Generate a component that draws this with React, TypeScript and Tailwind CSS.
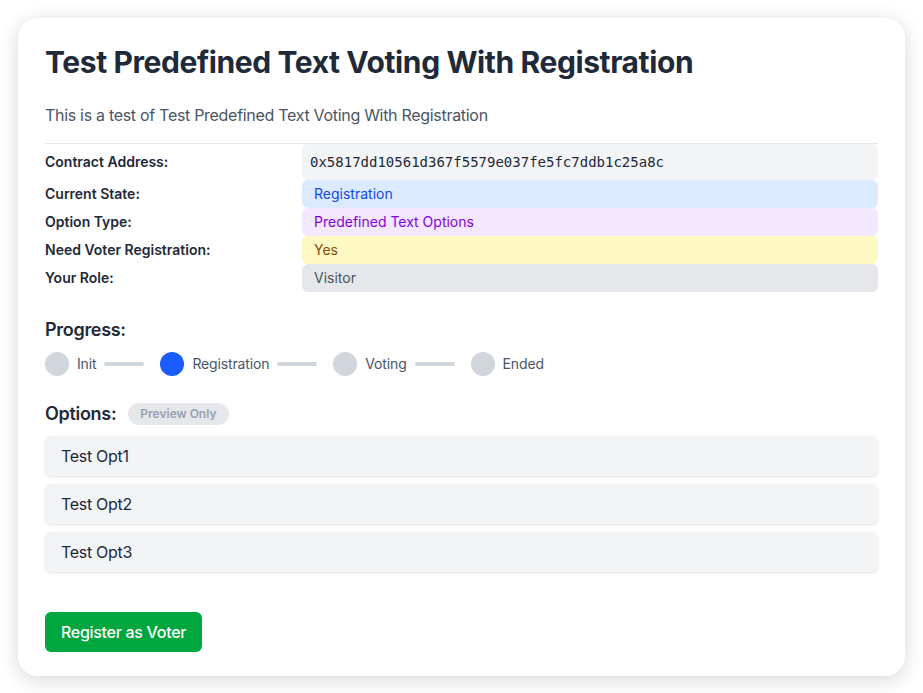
const rows = [
  { label: 'Current State:', value: 'Registration', cls: 'bg-blue-100 text-blue-700' },
  { label: 'Option Type:', value: 'Predefined Text Options', cls: 'bg-purple-100 text-purple-700' },
  { label: 'Need Voter Registration:', value: 'Yes', cls: 'bg-yellow-100 text-yellow-800' },
  { label: 'Your Role:', value: 'Visitor', cls: 'bg-gray-200 text-gray-600' },
];

const steps = ['Init', 'Registration', 'Voting', 'Ended'];
const options = ['Test Opt1', 'Test Opt2', 'Test Opt3'];

export default function App() {
  return (
    <div className="min-h-screen bg-white p-[18px] font-['Inter',sans-serif]">
      <div className="rounded-[20px] bg-white px-[27px] pt-[26px] pb-6 shadow-[0_4px_20px_rgba(0,0,0,0.16)]">
        <h1 className="text-3xl font-bold tracking-[-0.4px] text-gray-800">Test Predefined Text Voting With Registration</h1>
        <p className="mt-[23px] text-base tracking-[-0.3px] text-gray-600">This is a test of Test Predefined Text Voting With Registration</p>

        <div className="mt-4 border-t border-gray-200">
          <div className="grid grid-cols-[257px_1fr] items-center">
            <div className="text-sm font-semibold text-gray-800">Contract Address:</div>
            <div className="rounded-md bg-gray-100 px-2 py-2 font-['DejaVu_Sans_Mono',monospace] text-sm text-gray-800">
              0x5817dd10561d367f5579e037fe5fc7ddb1c25a8c
            </div>
            {rows.map((row) => (
              <div key={row.label} className="contents">
                <div className="text-sm font-semibold text-gray-800">{row.label}</div>
                <div className={`rounded-md px-3 py-1 text-sm ${row.cls}`}>{row.value}</div>
              </div>
            ))}
          </div>
        </div>

        <h2 className="mt-6 text-lg font-semibold tracking-[-0.3px] text-gray-800">Progress:</h2>
        <div className="mt-2 flex items-center gap-4">
          {steps.map((step, i) => (
            <div key={step} className="flex items-center gap-2">
              <div className={`h-6 w-6 rounded-full ${i === 1 ? 'bg-[#1a5cff]' : 'bg-gray-300'}`}></div>
              <span className="text-sm tracking-[-0.15px] text-gray-600">{step}</span>
              {i < steps.length - 1 && <div className="h-1 w-10 rounded bg-gray-300"></div>}
            </div>
          ))}
        </div>

        <div className="mt-6 flex items-center">
          <h2 className="text-lg font-semibold tracking-[-0.3px] text-gray-800">Options:</h2>
          <span className="ml-3 rounded-full bg-gray-200 px-3 py-[3px] text-xs font-semibold text-gray-400">Preview Only</span>
        </div>
        <div className="mt-2 flex flex-col gap-2">
          {options.map((opt) => (
            <div key={opt} className="rounded-md bg-gray-100 px-4 py-2 text-base tracking-[-0.3px] text-gray-800 shadow-sm">
              {opt}
            </div>
          ))}
        </div>

        <button className="mt-10 rounded-md bg-[#00a63e] px-4 py-2 text-base font-medium tracking-[-0.3px] text-white">
          Register as Voter
        </button>
      </div>
    </div>
  );
}
